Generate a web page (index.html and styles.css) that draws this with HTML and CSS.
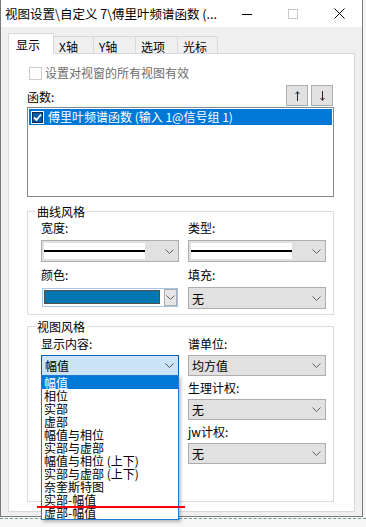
FILE: index.html
```html
<!DOCTYPE html>
<html lang="zh-CN">
  <head>
    <meta charset="UTF-8" />
    <title>视图设置</title>
    <link rel="stylesheet" href="styles.css">
  </head>
  <body>
    <div class="screen">
      <div class="window">
        <!-- 标题栏 -->
        <div class="titlebar">
          <span class="title">视图设置\自定义 7\傅里叶频谱函数 (...</span>
          <div class="caption">
            <span class="cap-btn">
              <svg width="10" height="10" viewBox="0 0 10 10"><path d="M0 5.5H10" stroke="#000" /></svg>
            </span>
            <span class="cap-btn">
              <svg width="10" height="10" viewBox="0 0 10 10"><rect x="0.5" y="0.5" width="9" height="9" fill="none" stroke="#c8c8c8" /></svg>
            </span>
            <span class="cap-btn">
              <svg width="11" height="11" viewBox="0 0 11 11"><path d="M0.5 0.5L10.5 10.5M10.5 0.5L0.5 10.5" stroke="#000" /></svg>
            </span>
          </div>
        </div>

        <div class="client">
          <!-- 选项卡 -->
          <div class="tabs">
            <div class="tab active">显示</div>
            <div class="tab tab-x">X轴</div>
            <div class="tab tab-y">Y轴</div>
            <div class="tab tab-opt">选项</div>
            <div class="tab tab-cur">光标</div>
          </div>

          <div class="panel">
            <div class="check-row disabled">
              <span class="checkbox"></span>
              <span>设置对视窗的所有视图有效</span>
            </div>

            <div class="func-head">
              <span class="func-label">函数:</span>
              <div class="move-btns">
                <span class="btn">
                  <svg width="5" height="10" viewBox="0 0 5 10"><path d="M2.5 0.5V10M0.5 3L2.5 0.8L4.5 3" fill="none" stroke="#1b2b3a" /></svg>
                </span>
                <span class="btn">
                  <svg width="5" height="10" viewBox="0 0 5 10"><path d="M2.5 0V9.5M0.5 7L2.5 9.2L4.5 7" fill="none" stroke="#3a1b1b" /></svg>
                </span>
              </div>
            </div>

            <div class="listbox">
              <div class="list-item selected">
                <span class="item-check">
                  <svg width="9" height="9" viewBox="0 0 9 9"><path d="M1 4.5L3.5 7L8 1.5" fill="none" stroke="#fff" stroke-width="1.8" /></svg>
                </span>
                <span>傅里叶频谱函数 (输入 1@信号组 1)</span>
              </div>
            </div>

            <!-- 曲线风格 -->
            <fieldset class="group">
              <legend>曲线风格</legend>
              <div class="fields curve">
                <div class="field">
                  <label>宽度:</label>
                  <div class="combo">
                    <span class="line-swatch"></span>
                    <svg class="chev" width="9" height="5" viewBox="0 0 9 5"><path d="M0.5 0.5L4.5 4.5L8.5 0.5" fill="none" stroke="#606060" /></svg>
                  </div>
                </div>
                <div class="field">
                  <label>类型:</label>
                  <div class="combo">
                    <span class="line-swatch"></span>
                    <svg class="chev" width="9" height="5" viewBox="0 0 9 5"><path d="M0.5 0.5L4.5 4.5L8.5 0.5" fill="none" stroke="#606060" /></svg>
                  </div>
                </div>
                <div class="field">
                  <label>颜色:</label>
                  <div class="color-combo">
                    <span class="color-swatch"></span>
                    <span class="drop-btn">
                      <svg width="9" height="5" viewBox="0 0 9 5"><path d="M0.5 0.5L4.5 4.5L8.5 0.5" fill="none" stroke="#606060" /></svg>
                    </span>
                  </div>
                </div>
                <div class="field">
                  <label>填充:</label>
                  <div class="combo">
                    <span class="combo-value">无</span>
                    <svg class="chev" width="9" height="5" viewBox="0 0 9 5"><path d="M0.5 0.5L4.5 4.5L8.5 0.5" fill="none" stroke="#606060" /></svg>
                  </div>
                </div>
              </div>
            </fieldset>

            <!-- 视图风格 -->
            <fieldset class="group">
              <legend>视图风格</legend>
              <div class="fields view">
                <div class="field">
                  <label>显示内容:</label>
                  <div class="combo focus">
                    <span class="combo-value">幅值</span>
                    <svg class="chev" width="9" height="5" viewBox="0 0 9 5"><path d="M0.5 0.5L4.5 4.5L8.5 0.5" fill="none" stroke="#505050" /></svg>
                  </div>
                  <ul class="droplist">
                    <li class="on">幅值</li>
                    <li>相位</li>
                    <li>实部</li>
                    <li>虚部</li>
                    <li>幅值与相位</li>
                    <li>实部与虚部</li>
                    <li>幅值与相位 (上下)</li>
                    <li>实部与虚部 (上下)</li>
                    <li>奈奎斯特图</li>
                    <li>实部-幅值</li>
                    <li>虚部-幅值</li>
                  </ul>
                </div>
                <div class="field right">
                  <label>谱单位:</label>
                  <div class="combo">
                    <span class="combo-value">均方值</span>
                    <svg class="chev" width="9" height="5" viewBox="0 0 9 5"><path d="M0.5 0.5L4.5 4.5L8.5 0.5" fill="none" stroke="#606060" /></svg>
                  </div>
                </div>
                <div class="field right">
                  <label>生理计权:</label>
                  <div class="combo">
                    <span class="combo-value">无</span>
                    <svg class="chev" width="9" height="5" viewBox="0 0 9 5"><path d="M0.5 0.5L4.5 4.5L8.5 0.5" fill="none" stroke="#606060" /></svg>
                  </div>
                </div>
                <div class="field right">
                  <label>jw计权:</label>
                  <div class="combo">
                    <span class="combo-value">无</span>
                    <svg class="chev" width="9" height="5" viewBox="0 0 9 5"><path d="M0.5 0.5L4.5 4.5L8.5 0.5" fill="none" stroke="#606060" /></svg>
                  </div>
                </div>
              </div>
            </fieldset>
          </div>
        </div>
      </div>

      <!-- 窗口后面的图表网格线 -->
      <div class="grid-line"></div>

      <!-- 红色标注线 -->
      <div class="mark-line"></div>
    </div>
  </body>
</html>
```

FILE: styles.css
```css
* {
  margin: 0;
  padding: 0;
  box-sizing: border-box;
}

body {
  background: #f6f6f6;
  font-family: "Noto Sans CJK SC", "Microsoft YaHei", sans-serif;
  font-size: 12px;
  line-height: 15px;
  color: #000;
}

.screen {
  position: relative;
  width: 366px;
  height: 527px;
  overflow: hidden;
}

/* 窗口 */
.window {
  width: 363px;
  background: #f0f0f0;
  border: 1px solid #7a7a7a;
  border-top: 0;
}

.titlebar {
  display: flex;
  align-items: center;
  height: 27px;
  background: #fff;
}

.title {
  flex: 1;
  padding-left: 4px;
  font-size: 12.5px;
  white-space: nowrap;
}

.caption {
  display: flex;
  height: 100%;
}

.cap-btn {
  width: 46px;
  display: flex;
  align-items: center;
  justify-content: center;
}

.client {
  padding: 6px 7px 4px 7px;
}

/* 选项卡 */
.tabs {
  display: flex;
  align-items: flex-end;
  height: 20px;
}

.tab {
  height: 17px;
  padding: 2px 0 0 5px;
  margin-left: -1px;
  border: 1px solid #d9d9d9;
  border-bottom: 0;
  background: #f0f0f0;
  white-space: nowrap;
}

.tab.active {
  position: relative;
  z-index: 1;
  width: 46px;
  height: 21px;
  margin-left: 0;
  margin-bottom: -1px;
  padding: 3px 0 0 7px;
  background: #fff;
}

.tab-x { width: 41px; }
.tab-y { width: 43px; }
.tab-opt { width: 43px; }
.tab-cur { width: 41px; }

.panel {
  height: 459px;
  padding: 11px 20px 0 18px;
  background: #fff;
  border: 1px solid #d9d9d9;
}

/* 复选框 */
.check-row {
  display: flex;
  align-items: flex-end;
  gap: 3px;
  height: 15px;
  padding-left: 2px;
}

.check-row.disabled {
  color: #6d6d6d;
}

.checkbox {
  width: 13px;
  height: 13px;
  border: 1px solid #cccccc;
  background: #fff;
}

/* 函数 */
.func-head {
  display: flex;
  justify-content: space-between;
  margin-top: 5px;
  height: 21px;
}

.func-label {
  padding-top: 4px;
}

.move-btns {
  display: flex;
  gap: 3px;
  margin-right: 1px;
}

.btn {
  display: flex;
  align-items: center;
  justify-content: center;
  width: 22px;
  height: 21px;
  background: #e1e1e1;
  border: 1px solid #adadad;
}

.listbox {
  margin-top: 1px;
  height: 90px;
  padding: 1px;
  border: 1px solid #828790;
}

.list-item {
  display: flex;
  align-items: center;
  gap: 4px;
  height: 16px;
  padding-left: 2px;
  line-height: 16px;
}

.list-item.selected {
  background: #0078d7;
  color: #fff;
}

.item-check {
  display: flex;
  align-items: center;
  justify-content: center;
  width: 13px;
  height: 13px;
  background: #0a5cab;
  border: 1px solid #fff;
  outline: 1px solid #0b2a4a;
  outline-offset: -2px;
}

/* 分组框 */
.group {
  margin-top: 7px;
  border: 1px solid #dcdcdc;
  min-width: 0;
}

.group + .group {
  margin-top: 4px;
}

.group legend {
  margin-left: 7px;
  padding: 0 2px;
  line-height: 15px;
}

.fields {
  display: grid;
  grid-template-columns: 138px 138px;
  column-gap: 9px;
  padding-left: 13px;
}

.fields.curve {
  row-gap: 5px;
  padding-top: 1px;
  padding-bottom: 5px;
}

.fields.view {
  row-gap: 4px;
  padding-top: 2px;
  padding-bottom: 37px;
}

.field {
  position: relative;
  display: flex;
  flex-direction: column;
}

.field.right {
  grid-column: 2;
}

.field label {
  line-height: 15px;
  margin-bottom: 5px;
}

.fields.view .field label {
  margin-bottom: 4px;
}

/* 下拉框 */
.combo {
  display: flex;
  align-items: center;
  height: 22px;
  padding-left: 3px;
  background: #e1e1e1;
  border: 1px solid #adadad;
}

.fields.view .combo {
  height: 21px;
}

.combo.focus {
  background: #cce4f7;
  border-color: #0060b0;
}

.combo-value {
  line-height: 15px;
}

.chev {
  margin-left: auto;
  margin-right: 4px;
}

.line-swatch {
  width: 101px;
  height: 16px;
  margin-left: -1px;
  background: #fff linear-gradient(#000, #000) center / 100% 2px no-repeat;
}

.color-combo {
  display: flex;
  align-items: flex-start;
  height: 19px;
  margin: 1px 1px 0 1px;
  background: #fff;
  border: 1px solid #a8c4e4;
}

.color-swatch {
  width: 116px;
  height: 14px;
  margin: 1px 0 0 1px;
  background: #0077b3;
  border: 1px solid #505050;
}

.drop-btn {
  display: flex;
  align-items: center;
  justify-content: center;
  width: 13px;
  height: 17px;
  margin-left: auto;
  background: #e6e6e6;
  border: 1px solid #adadad;
}

/* 展开的下拉列表 */
.droplist {
  position: absolute;
  top: 39px;
  left: 0;
  z-index: 5;
  width: 138px;
  list-style: none;
  background: #fff;
  border: 1px solid #1f7ad0;
  box-shadow: 2px 2px 3px rgba(0, 0, 0, 0.25);
}

.droplist li {
  height: 13px;
  padding-left: 2px;
  line-height: 13px;
  white-space: nowrap;
}

.droplist li.on {
  background: #0078d7;
  color: #fff;
}

/* 背景 */
.grid-line {
  margin-top: 1px;
  border-top: 1px dashed #6f9c9c;
}

.mark-line {
  position: absolute;
  left: 37px;
  top: 506px;
  z-index: 10;
  width: 148px;
  height: 2px;
  background: #ff0000;
}
```
